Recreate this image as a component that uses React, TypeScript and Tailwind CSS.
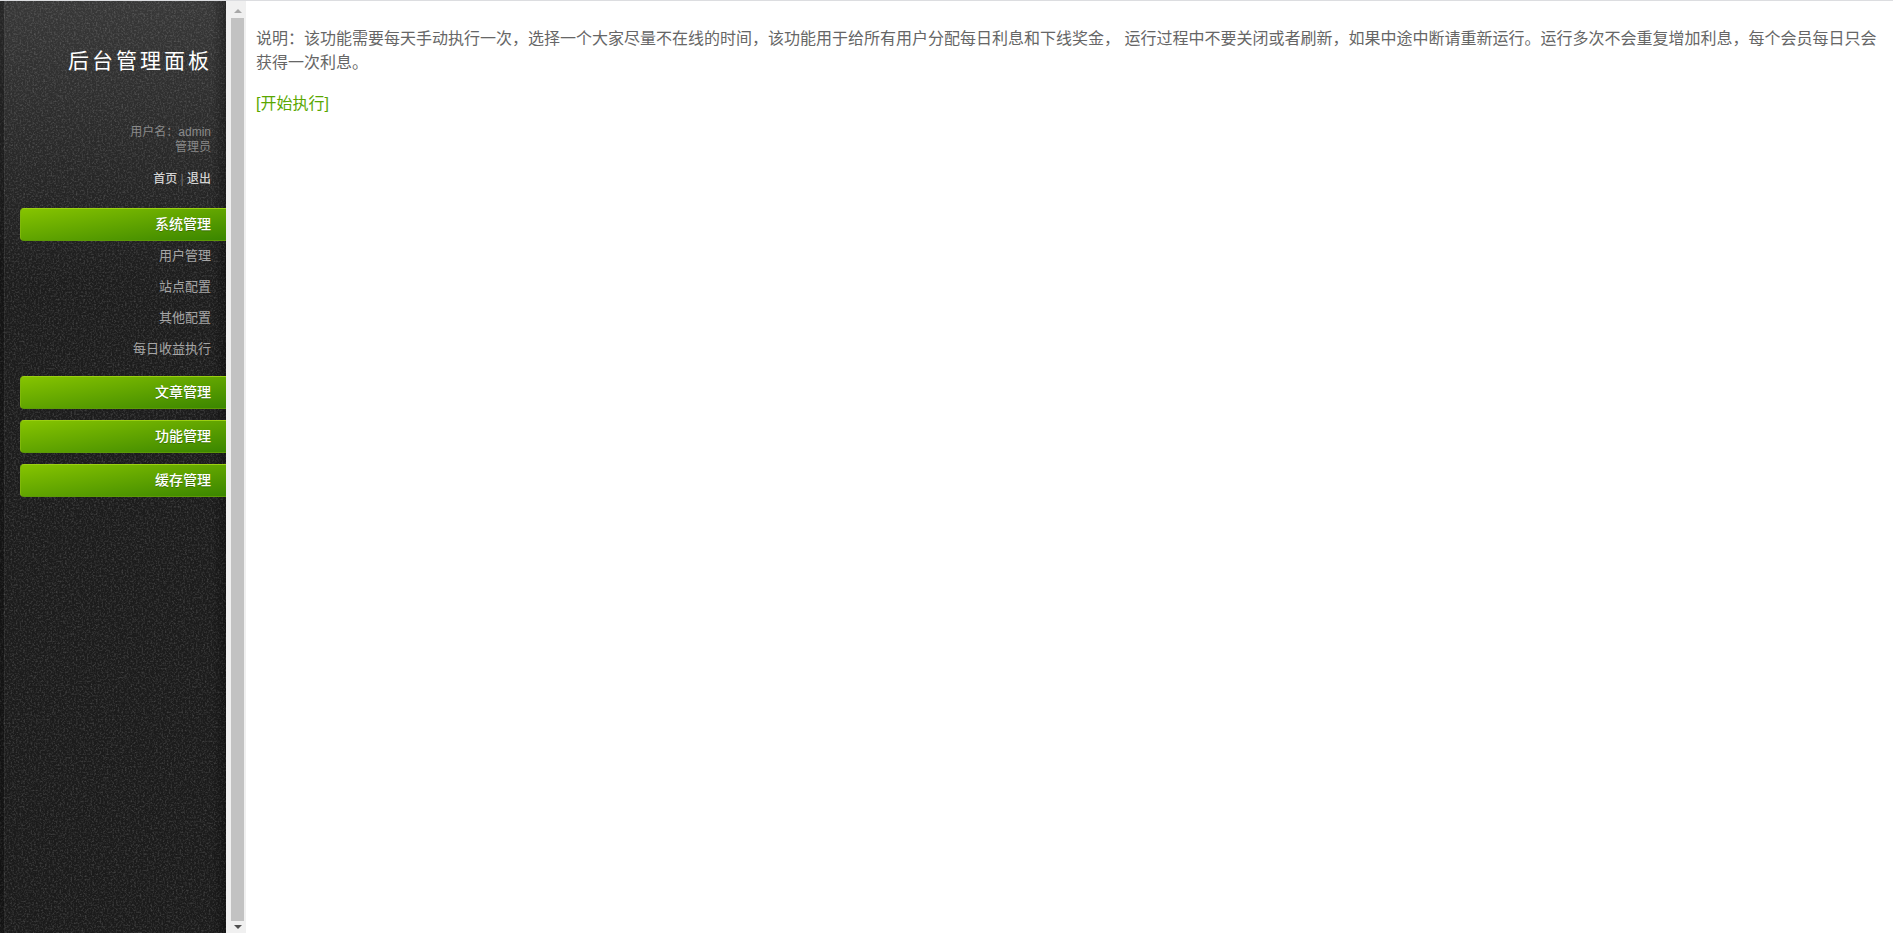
import React from "react";

const subItems = ["用户管理", "站点配置", "其他配置", "每日收益执行"];

function MenuButton({ label }: { label: string }) {
  return (
    <div className="ml-5 h-[33px] rounded-l-[4px] border-t border-l border-b border-t-[#9bcf12] border-l-[#7fb80c] border-b-[#5d9a06] bg-gradient-to-br from-[#86c400] to-[#3a8600] pr-[15px] text-right text-[14px] leading-[31px] font-medium text-white [text-shadow:0_1px_0_rgba(0,0,0,0.25)]">
      {label}
    </div>
  );
}

export default function App() {
  return (
    <div className="flex h-[933px] w-[1893px] flex-col overflow-hidden bg-white font-['Liberation_Sans','Noto_Sans_CJK_SC',sans-serif]">
      <div className="h-px w-full shrink-0 bg-[#dcdde0]" />
      <div className="flex min-h-0 flex-1">
        <aside className="relative w-[226px] shrink-0 overflow-hidden bg-[#1e1e1e]">
          {/* textured backdrop of the panel */}
          <svg className="absolute inset-0 h-full w-full" aria-hidden="true">
            <defs>
              <filter id="grain" x="0" y="0" width="100%" height="100%">
                <feTurbulence type="fractalNoise" baseFrequency="0.55" numOctaves="2" seed="4" />
                <feColorMatrix type="matrix" values="0 0 0 0 1  0 0 0 0 1  0 0 0 0 1  2.4 0 0 0 -1.05" />
              </filter>
              <linearGradient id="sheen" x1="0" y1="0" x2="0" y2="1">
                <stop offset="0" stopColor="#383838" />
                <stop offset="0.3" stopColor="#1d1d1d" />
                <stop offset="1" stopColor="#1b1b1b" />
              </linearGradient>
              <linearGradient id="edge" x1="0" y1="0" x2="1" y2="0">
                <stop offset="0.94" stopColor="#000" stopOpacity="0" />
                <stop offset="1" stopColor="#000" stopOpacity="0.3" />
              </linearGradient>
            </defs>
            <rect width="100%" height="100%" fill="url(#sheen)" />
            <rect width="100%" height="100%" filter="url(#grain)" opacity="0.16" />
            <rect width="100%" height="100%" fill="url(#edge)" />
            <rect width="4" height="100%" fill="#000" opacity="0.3" />
            <rect x="4" width="1" height="100%" fill="#fff" opacity="0.05" />
          </svg>

          <div className="relative flex flex-col">
            <div className="mt-[45px] pr-[14px] text-right text-[21px] leading-[30px] font-normal tracking-[3px] text-white">
              后台管理面板
            </div>
            <div className="mt-[49px] pr-[15px] text-right text-[12px] leading-[15px] text-[#8a8a8a]">
              <div>用户名：admin</div>
              <div>管理员</div>
            </div>
            <div className="mt-[16px] pr-[15px] text-right text-[12px] leading-[16px] font-medium text-[#d4d4d4]">
              首页 <span className="font-normal text-[#777]">|</span> 退出
            </div>
            <div className="mt-[21px]">
              <MenuButton label="系统管理" />
            </div>
            <ul className="mb-[11px] flex flex-col">
              {subItems.map((s) => (
                <li key={s} className="h-[31px] pr-[15px] text-right text-[13px] leading-[30px] text-[#a6a6a6]">
                  {s}
                </li>
              ))}
            </ul>
            <div className="flex flex-col gap-[11px]">
              <MenuButton label="文章管理" />
              <MenuButton label="功能管理" />
              <MenuButton label="缓存管理" />
            </div>
          </div>
        </aside>

        <div className="flex w-5 shrink-0 flex-col bg-[#f0f0f0] pl-[5px] pr-[2px]">
          <div className="flex h-[17px] shrink-0 items-center justify-center">
            <div className="mt-[3px] h-0 w-0 border-x-[4px] border-b-[4px] border-x-transparent border-b-[#a8a8a8]" />
          </div>
          <div className="flex-1 bg-[#c2c2c2]" />
          <div className="flex h-[12px] shrink-0 items-center justify-center">
            <div className="h-0 w-0 border-x-[4px] border-t-[4px] border-x-transparent border-t-[#505050]" />
          </div>
        </div>

        <main className="min-w-0 flex-1 pl-[10px] pr-[8px] pt-[26px] text-[16px] leading-[24px] text-[#666]">
          <p>
            说明：该功能需要每天手动执行一次，选择一个大家尽量不在线的时间，该功能用于给所有用户分配每日利息和下线奖金， 运行过程中不要关闭或者刷新，如果中途中断请重新运行。运行多次不会重复增加利息，每个会员每日只会获得一次利息。
          </p>
          <p className="mt-[17px]">
            <a className="text-[#5aa700]">[开始执行]</a>
          </p>
        </main>
      </div>
    </div>
  );
}
